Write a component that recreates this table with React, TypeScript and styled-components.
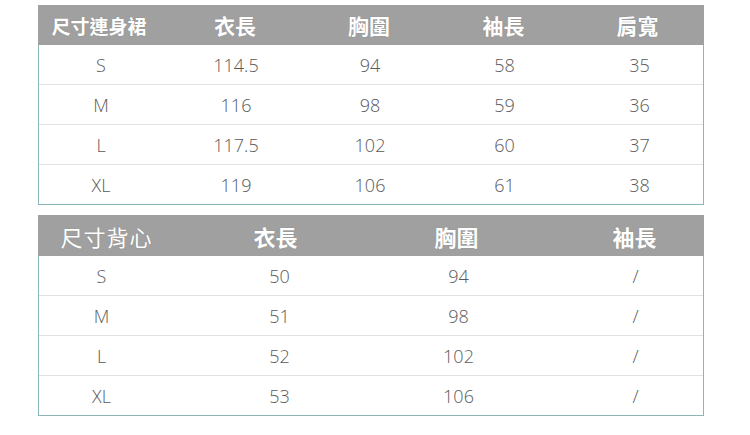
import React from "react";
import styled, { createGlobalStyle } from "styled-components";

const GlobalStyle = createGlobalStyle`
  html, body {
    margin: 0;
    padding: 0;
    background: #ffffff;
  }
  body {
    font-family: "Open Sans", "Noto Sans", "Noto Sans CJK TC", sans-serif;
  }
`;

const Page = styled.main`
  display: flex;
  flex-direction: column;
  gap: 10px;
  width: 666px;
  padding: 5px 0 0 38px;
`;

const Table = styled.section`
  display: flex;
  flex-direction: column;
  border: 1px solid #8db6b8;
  border-top: none;
  background: #fff;
`;

const HeadRow = styled.div<{ $cols: string; $h: number }>`
  display: grid;
  grid-template-columns: ${(p) => p.$cols};
  height: ${(p) => p.$h}px;
  margin: 0 -1px;
  background: #a0a0a0;
  align-items: center;
`;

const HeadCell = styled.div<{ $light?: boolean; $size?: number; $shift?: number }>`
  text-align: center;
  color: #ffffff;
  font-family: "Noto Sans CJK TC", "Noto Sans", sans-serif;
  font-size: ${(p) => p.$size ?? 22}px;
  font-weight: ${(p) => (p.$light ? 400 : 700)};
  letter-spacing: ${(p) => (p.$light ? "1px" : "0")};
  transform: translateX(${(p) => p.$shift ?? 0}px);
  text-shadow: 0 0 1px rgba(80, 80, 80, 0.35);
  line-height: 1;
`;

const Row = styled.div<{ $cols: string }>`
  display: grid;
  grid-template-columns: ${(p) => p.$cols};
  height: 39px;
  align-items: center;

  & + & {
    border-top: 1px solid #e2e2e2;
  }
`;

const Cell = styled.div<{ $shift?: number }>`
  text-align: center;
  color: #5a5a5a;
  font-size: 18px;
  font-weight: 300;
  padding-top: 1px;
  transform: translateX(${(p) => p.$shift ?? 0}px);
  line-height: 1;
`;

const dressCols = "130px 134px 134px 135px 1fr";
const vestCols = "151px 179px 179px 1fr";

const dressHead = ["尺寸連身裙", "衣長", "胸圍", "袖長", "肩寬"];
const dress = [
  ["S", "114.5", "94", "58", "35"],
  ["M", "116", "98", "59", "36"],
  ["L", "117.5", "102", "60", "37"],
  ["XL", "119", "106", "61", "38"],
];

const vestHead = ["尺寸背心", "衣長", "胸圍", "袖長"];
const vest = [
  ["S", "50", "94", "/"],
  ["M", "51", "98", "/"],
  ["L", "52", "102", "/"],
  ["XL", "53", "106", "/"],
];

const dressShift = [-3, 0, 0, 0, 2];
const vestShift = [-13, 0, 0, 10];
const vestHeadShift = [-7, -3, -1, 9];

export default function App() {
  return (
    <>
      <GlobalStyle />
      <Page>
        <Table>
          <HeadRow $cols={dressCols} $h={40}>
            {dressHead.map((h, i) => (
              <HeadCell key={h} $size={i === 0 ? 19 : 21} $shift={i === 0 ? -4 : 0}>
                {h}
              </HeadCell>
            ))}
          </HeadRow>
          {dress.map((r) => (
            <Row key={r[0]} $cols={dressCols}>
              {r.map((v, i) => (
                <Cell key={i} $shift={dressShift[i]}>{v}</Cell>
              ))}
            </Row>
          ))}
        </Table>

        <Table>
          <HeadRow $cols={vestCols} $h={41}>
            {vestHead.map((h, i) => (
              <HeadCell key={h} $light={i === 0} $shift={vestHeadShift[i]}>
                {h}
              </HeadCell>
            ))}
          </HeadRow>
          {vest.map((r) => (
            <Row key={r[0]} $cols={vestCols}>
              {r.map((v, i) => (
                <Cell key={i} $shift={vestShift[i]}>{v}</Cell>
              ))}
            </Row>
          ))}
        </Table>
      </Page>
    </>
  );
}
